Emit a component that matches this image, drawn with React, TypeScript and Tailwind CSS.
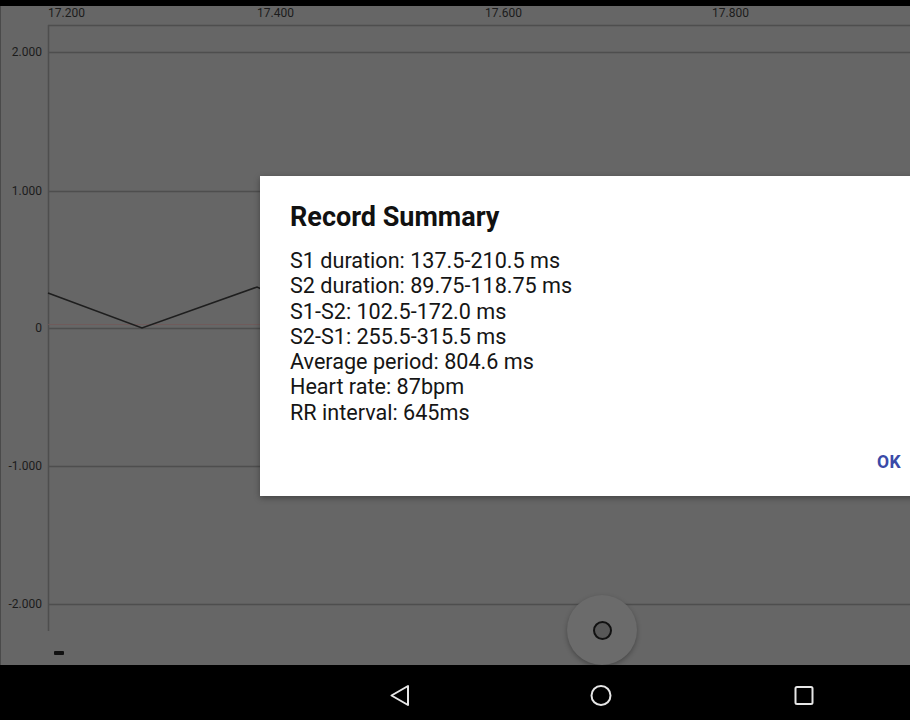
import React from 'react';

const summary = [
  'S1 duration: 137.5-210.5 ms',
  'S2 duration: 89.75-118.75 ms',
  'S1-S2: 102.5-172.0 ms',
  'S2-S1: 255.5-315.5 ms',
  'Average period: 804.6 ms',
  'Heart rate: 87bpm',
  'RR interval: 645ms',
];

// y positions are relative to the chart area (page y - 6)
const yTicks = [
  { label: '2.000', y: 46 },
  { label: '1.000', y: 185 },
  { label: '0', y: 322 },
  { label: '-1.000', y: 460 },
  { label: '-2.000', y: 598 },
];

const xTicks = [
  { label: '17.200', x: 47 },
  { label: '17.400', x: 256 },
  { label: '17.600', x: 484 },
  { label: '17.800', x: 711 },
];

function Chart() {
  return (
    <svg width="910" height="659" className="absolute inset-0" style={{ fontFamily: 'Roboto, "Liberation Sans", sans-serif' }}>
      {xTicks.map((t) => (
        <text key={t.label} x={t.x} y={11} fontSize="12" fill="#1c1c1c">
          {t.label}
        </text>
      ))}
      <line x1="47" y1="19.5" x2="910" y2="19.5" stroke="#4e4e4e" strokeWidth="1.5" />
      <line x1="47.5" y1="19" x2="47.5" y2="625" stroke="#4e4e4e" strokeWidth="1.5" />
      {yTicks.map((t) => (
        <g key={t.label}>
          <line x1="47" y1={t.y + 0.5} x2="910" y2={t.y + 0.5} stroke="#4e4e4e" strokeWidth="1.5" />
          <text x={41} y={t.y + 4} fontSize="12" fill="#1c1c1c" textAnchor="end">
            {t.label}
          </text>
        </g>
      ))}
      <line x1="47" y1="318.5" x2="910" y2="318.5" stroke="#715858" strokeWidth="0.8" />
      <polyline
        points="47,287 141,322 256,281 300,300"
        fill="none"
        stroke="#1e1e1e"
        strokeWidth="1.6"
      />
      <rect x="53" y="645" width="10" height="4" rx="1" fill="#111" />
    </svg>
  );
}

function NavBar() {
  return (
    <div className="h-[55px] bg-black relative flex items-center">
      <svg width="910" height="55" className="absolute inset-0">
        <path d="M408 21 L408 40 L391.5 30.5 Z" fill="none" stroke="#e6e6e6" strokeWidth="2" strokeLinejoin="round" />
        <circle cx="601" cy="30.5" r="9.5" fill="none" stroke="#e6e6e6" strokeWidth="2" />
        <rect x="795.5" y="22" width="17" height="17" rx="1.5" fill="none" stroke="#e6e6e6" strokeWidth="2" />
      </svg>
    </div>
  );
}

export default function App() {
  return (
    <div className="w-[910px] h-[720px] flex flex-col bg-black overflow-hidden" style={{ fontFamily: 'Roboto, "Liberation Sans", sans-serif' }}>
      <div className="h-[6px] bg-black" />
      <div className="relative flex-1 bg-[#666666] border-l border-[#4a4a4a]">
        <Chart />

        <div className="absolute left-[259px] top-[170px] w-[660px] h-[320px] bg-white shadow-[0_2px_6px_rgba(0,0,0,0.35)] flex flex-col">
          <div className="pl-[30px] pt-[25px]">
            <h2 className="text-[27px] leading-[33px] font-bold text-[#111]">Record Summary</h2>
            <div className="mt-[14px] text-[21.6px] leading-[25.3px] text-[#151515]">
              {summary.map((line) => (
                <div key={line}>{line}</div>
              ))}
            </div>
          </div>
          <div className="flex-1" />
          <div className="flex justify-end pr-[19px] pb-[25px]">
            <button className="text-[17.5px] font-bold text-[#3a4aa8] tracking-wide leading-none">OK</button>
          </div>
        </div>

        <div className="absolute left-[566px] top-[589px] w-[70px] h-[70px] rounded-full bg-[#6b6b6b] shadow-[0_2px_5px_rgba(0,0,0,0.3)] flex items-center justify-center">
          <div className="w-[19px] h-[19px] rounded-full border-2 border-[#111] bg-[#585858]" />
        </div>
      </div>
      <NavBar />
    </div>
  );
}
